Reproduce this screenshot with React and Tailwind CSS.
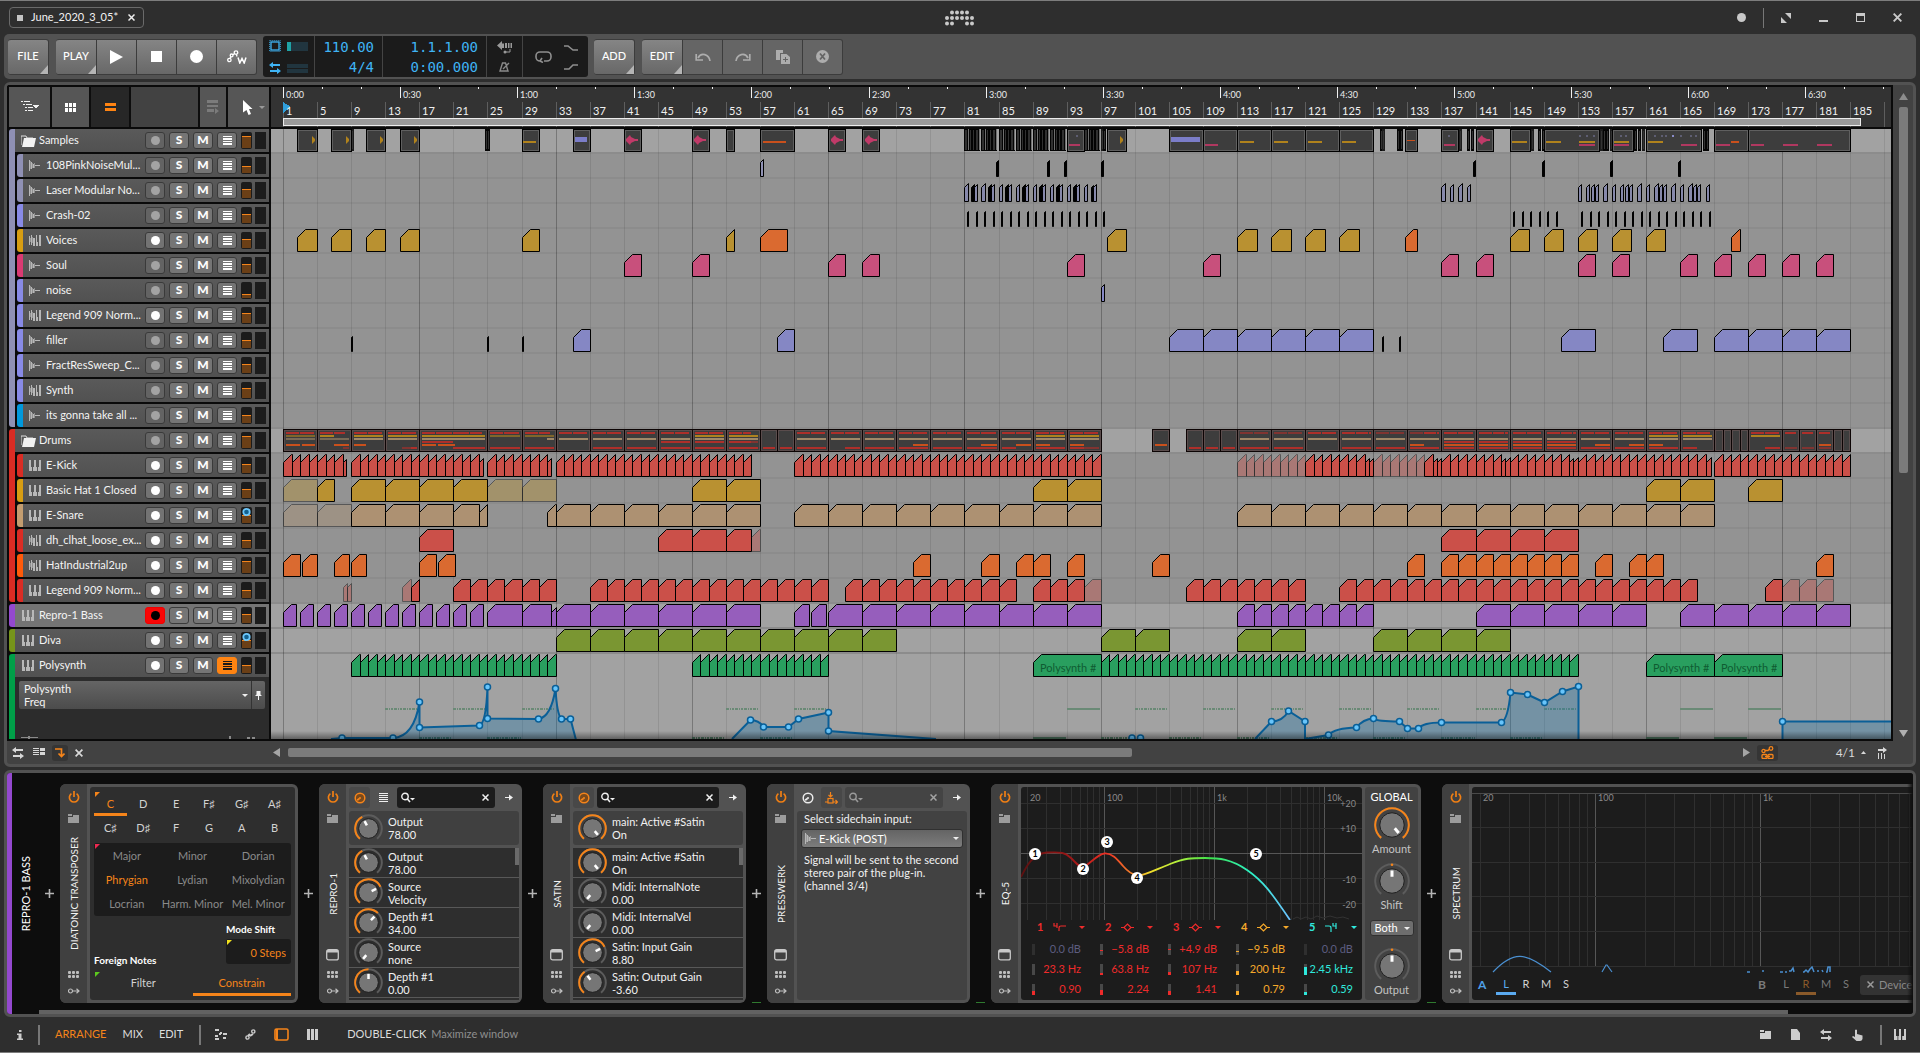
import { useState } from "react";
import clsx from "clsx";

// timeline scale
const BAR = 8.518;
const ORIGIN = 12;
const X = (bar) => Math.round(ORIGIN + BAR * bar);

// clips of equal length, back to back
const run = (from, to, step, extra) => {
	const out = [];
	for (let b = from; b < to - 0.01; b += step) out.push([b, Math.min(b + step, to), extra]);
	return out;
};
const each = (starts, len, extra) => starts.map((s) => [s, s + len, extra]);

const GOLD = "#b99131";
const ORANGE = "#da6a30";
const PINK = "#c8507c";
const LAV = "#8587c4";
const RED = "#cb5049";
const TAN = "#ad9172";
const PURPLE = "#965ebc";
const OLIVE = "#7a9632";
const GREEN = "#299f5f";
const faded = { faded: true };
const black = { color: "#000" };

const laser = [];
for (let b = 80; b < 96; b += 2) laser.push([b, b + 0.4], [b + 0.8, b + 1.1, black], [b + 1.1, b + 1.5]);

const samples = [
	{ name: "108PinkNoiseMul...", kind: "audio", strip: "bg-[#8f90b4]", fader: 9, color: "#9092b4", clips: [[56, 56.4], ...each([83.7, 89.7, 91.7, 96, 139.7, 147.8, 155.8, 163.8], 0.25, black)] },
	{ name: "Laser Modular No...", kind: "audio", strip: "bg-[#8f90b4]", fader: 7, color: "#8688aa", clips: [...laser, ...each([136, 137, 138, 139, 152, 152.95, 153.5, 154, 155, 156, 156.95, 157.5, 158, 159, 160, 161, 161.5, 162, 163, 164, 165, 165.5, 166, 167], 0.4)] },
	{ name: "Crash-02", kind: "audio", strip: "bg-[#888ae6]", fader: 7, color: "#000", clips: [...run(80.3, 97, 1), ...run(144.4, 150, 1), ...run(152.4, 168, 1)].map(([s]) => [s, s + 0.12]) },
	{ name: "Voices", kind: "hybrid", arm: true, strip: "bg-[#d79d12]", fader: 7, color: GOLD, clips: [[1.67, 4], [5.65, 8], [9.75, 12], [13.75, 16], [28, 30], [52, 53], [56, 59.2, { color: ORANGE }], [96.7, 99], ...each([112, 116, 120, 124], 2.3), [131.7, 133.1, { color: ORANGE }], ...each([144, 148, 152, 156, 160], 2.3), [170, 171, { color: ORANGE }]] },
	{ name: "Soul", kind: "audio", strip: "bg-[#da3a72]", fader: 7, color: PINK, clips: each([40, 48, 64, 68, 92, 108, 136, 140, 152, 156, 164, 168, 172, 176, 180], 2) },
	{ name: "noise", kind: "audio", strip: "bg-[#888ae6]", fader: 12, color: LAV, clips: [[96, 96.4]] },
	{ name: "Legend 909 Norm...", kind: "hybrid", arm: true, strip: "bg-[#888ae6]", fader: 6, clips: [] },
	{ name: "filler", kind: "audio", strip: "bg-[#888ae6]", fader: 8, color: LAV, clips: [...each([8, 24, 28, 129, 131], 0.12, black), [34, 36], [58, 60], ...run(104, 128, 4), [150, 154], [162, 166], ...run(168, 184, 4)] },
	{ name: "FractResSweep_C...", kind: "audio", strip: "bg-[#888ae6]", fader: 7, clips: [] },
	{ name: "Synth", kind: "hybrid", strip: "bg-[#888ae6]", fader: 6, clips: [] },
	{ name: "its gonna take all ...", kind: "audio", strip: "bg-[#0098dc]", fader: 8, clips: [] },
];

const drums = [
	{ name: "E-Kick", kind: "keys", arm: true, strip: "bg-[#da2c24]", fader: 7, color: RED, clips: [...run(0, 7.4, 1), ...run(8, 23.5, 1), ...run(24, 31.5, 1), ...run(32, 55, 1), ...run(60, 96, 1), ...run(112, 120, 1, faded), ...run(120, 127, 1), ...run(127, 128, 0.5), ...run(128, 134, 1, faded), [134, 135], ...run(135, 136, 0.5), ...run(136, 143, 1), ...run(143, 144, 0.5), ...run(144, 151, 1), ...run(151, 152, 0.5), ...run(152, 167.6, 1), ...run(168, 184, 1)] },
	{ name: "Basic Hat 1 Closed", kind: "keys", arm: true, strip: "bg-[#d79d12]", fader: 7, color: GOLD, clips: [[0, 4, faded], [4, 6], ...run(8, 24, 4), ...run(24, 32, 4, faded), ...run(48, 56, 4), ...run(88, 96, 4), ...run(160, 168, 4), [172, 176]] },
	{ name: "E-Snare", kind: "keys", arm: true, strip: "bg-[#c39d70]", knob: true, color: TAN, clips: [...run(0, 8, 4, faded), ...run(8, 20, 4), [20, 23], [23, 24], [31, 32], ...run(32, 56, 4), ...run(60, 96, 4), ...run(112, 168, 4)] },
	{ name: "dh_clhat_loose_ex...", kind: "hybrid", arm: true, strip: "bg-[#da2c24]", fader: 8, color: RED, clips: [[16, 20], [44, 48], [48, 52], [52, 55], [55, 56, faded], ...run(136, 152, 4)] },
	{ name: "HatIndustrial2up", kind: "hybrid", arm: true, strip: "bg-[#ff5a0a]", fader: 4, color: ORANGE, clips: [[0, 2], [2.2, 4], [6, 7.8], [8, 9.8], [16, 18], [18.2, 20.2], [74, 76], [82, 84], [86, 88], [88, 90], [92, 94], [102, 104], [132, 134], ...run(136, 152, 2), [154, 156], [158, 160], [160, 162], [180, 182]] },
	{ name: "Legend 909 Norm...", kind: "keys", arm: true, strip: "bg-[#da2c24]", fader: 8, color: RED, clips: [[7, 7.5, faded], [7.5, 8, faded], [14, 15, faded], [15, 16], ...run(20, 32, 2), ...run(36, 64, 2), ...run(66, 86, 2), ...run(88, 94, 2), [94, 96, faded], ...run(106, 120, 2), ...run(124, 166, 2), [174, 176], ...run(176, 182, 2, faded)] },
];

const repro = { name: "Repro-1 Bass", kind: "keys", selected: true, strip: "bg-[#9449cf]", fader: 7, color: PURPLE, clips: [...each([0, 2, 4, 6, 8, 10, 12, 14, 16, 18, 20, 22], 1.5), [24, 28], [28, 31.5], [31.5, 32], ...run(32, 56, 4), [60, 61.8], [62, 63.8], ...run(64, 96, 4), ...run(112, 128, 2), ...run(140, 160, 4), ...run(164, 184, 4)] };
const diva = { name: "Diva", kind: "keys", arm: true, strip: "bg-[#76941a]", knob: true, color: OLIVE, clips: [...run(32, 72, 4), ...run(96, 104, 4), ...run(112, 120, 4), ...run(128, 144, 4)] };
const poly = { name: "Polysynth", kind: "keys", arm: true, lanes: true, strip: "bg-[#009f48]", fader: 8, color: GREEN, clips: [...run(8, 32, 1), ...run(48, 64, 1), [88, 96], ...run(96, 152, 1), [160, 168], [168, 176]] };

// folder lane of "Samples": outer blocks, thin stripes and miniature content
const sampleBlocks = [[1.67, 4], [5.65, 8], [9.75, 12], [13.75, 16], [28, 30], [34, 36], [40, 42], [48, 50], [52, 53], [56, 60], [64, 66], [68, 70], [92, 94], [96.7, 99], [104, 108], [108, 112], [112, 116], [116, 120], [120, 124], [124, 128], [131.7, 133.1], [136, 138], [140, 142], [144, 146.4], [148, 154.5], [156, 158.5], [160, 166.5], [168, 172], [172, 184]];
const stripes = [8, 23.7, 23.95, 96, 96.3, 128.8, 129.05, 130.8, 131.1, 138.1, 139, 139.5, 146.5, 147.3, 147.8, 154.6, 155, 155.3, 155.8, 158.6, 159.1, 159.5, 166.7, 167.1];
const denseBars = [80, 82, 84, 86, 88, 90, 94];
const minis = [
	[28.2, 29.7, 12, 2, "#b0821c"], [34.3, 35.7, 8, 5, "#7b7dc8"], [56.3, 59, 12, 2, "#c9501c"],
	[92.3, 93.6, 15, 2, "#b03860"], [104.3, 107.7, 8, 5, "#7b7dc8"], [108.3, 109.8, 15, 2, "#b03860"],
	[112.3, 114, 12, 2, "#b0821c"], [116.3, 118, 12, 2, "#b0821c"], [120.3, 122, 12, 2, "#b0821c"], [124.3, 126, 12, 2, "#b0821c"],
	[132, 132.9, 11, 1, "#c9501c"], [136.3, 137.6, 15, 2, "#b03860"], [144.3, 146, 12, 2, "#b0821c"],
	[148.3, 150, 12, 2, "#b0821c"], [152.1, 154, 12, 2, "#b0821c"], [152.1, 154, 15, 2, "#b03860"],
	[156.3, 158, 12, 2, "#b0821c"], [156.3, 158, 15, 2, "#b03860"], [160.3, 162, 12, 2, "#b0821c"],
	[164.1, 166, 15, 2, "#b03860"], [168.2, 169.9, 15, 2, "#b03860"], [170, 170.9, 12, 2, "#c9501c"],
	[172.3, 173.9, 15, 2, "#b03860"], [176.1, 177.8, 15, 2, "#b03860"], [180.1, 181.9, 15, 2, "#b03860"],
];
const tinyWaves = [3.4, 7.4, 11.4, 15.4, 98.3];
const bigWaves = [40.3, 48.3, 64.3, 68.3, 140.3];

const drumBlocks = [...run(0, 16, 4), [16, 24], ...run(24, 56, 4), [56, 58], [58, 60], ...run(60, 96, 4), [102, 104], ...run(106, 112, 2), ...run(112, 168, 4), ...run(168, 172, 1), [172, 176], [176, 178], [178, 180], [180, 182], [182, 183], [183, 184]];
const drumMini = ["#ad2f2a", "#ad821f", "#a08868", "#ad2f2a", "#c9501c", "#ad2f2a"];

const Clip = ({ from, to, color, dim }) => {
	const x = X(from) + 0.5;
	const w = Math.max(1, X(to) - X(from));
	const cut = Math.min(w, 8);
	return (
		<path
			d={`M${x},8.5 L${x + cut},${8.5 - cut} H${x + w} V22.5 H${x} Z`}
			fill={color}
			stroke="#000"
			opacity={dim ? 0.4 : 1}
		/>
	);
};

const Block = ({ from, to }) => {
	const x = X(from);
	const w = X(to) - x;
	return (
		<g shapeRendering="crispEdges">
			<rect x={x} y="0" width={w + 1} height="23" fill="#000" />
			<rect x={x + 1} y="1" width={Math.max(1, w - 1)} height="21" fill="#5f5f5f" />
			<rect x={x + 2} y="2" width={Math.max(0, w - 3)} height="19" fill="#3d3d3d" />
		</g>
	);
};

const SamplesLane = () => (
	<svg className="relative z-10 h-full w-full" aria-hidden="true">
		{stripes.map((b, i) => (
			<g key={i} shapeRendering="crispEdges">
				<rect x={X(b)} y="0" width="3" height="22" fill={i % 3 ? "#050505" : "#1c1c1c"} />
				<rect x={X(b) + 1} y="2" width="1" height="18" fill="#333" />
			</g>
		))}
		{denseBars.map((b) => (
			<g key={b} shapeRendering="crispEdges" transform={`translate(${X(b)},0)`}>
				<rect y="0" width="16" height="22" fill="#030303" />
				<path d="M1,1 H3 V21 H1 Z M6,1 H7 V21 H6 Z M9,1 H10 V21 H9 Z M12,1 H14 V21 H12 Z" fill="#303030" />
				<path d="M4,0 H5 V21 H4 Z M15,0 H16 V21 H15 Z" fill="#6f6f6f" />
			</g>
		))}
		{sampleBlocks.map(([s, e], i) => <Block key={i} from={s} to={e} />)}
		{minis.map(([s, e, y, h, c], i) => (
			<rect key={i} x={X(s)} y={y} width={X(e) - X(s)} height={h} fill={c} />
		))}
		{tinyWaves.map((b) => (
			<path key={b} d={`M${X(b)},7 V15 L${X(b) + 3},12 V10 Z`} fill="#b0821c" />
		))}
		{bigWaves.map((b) => (
			<path key={b} d={`M${X(b)},10 l2,-2 l2,-2 l1,2 l2,1 l2,1 h3 v2 h-3 l-2,1 l-2,1 l-1,2 l-2,-2 l-2,-2 z`} fill="#c03a68" />
		))}
		{[93.1, 136.8, 152.1, 153, 153.8, 157, 157.6, 161, 161.8, 162.3, 164, 165.2, 165.8].map((b) => (
			<rect key={b} x={X(b)} y="6" width="2" height="2" fill="#5e5e72" />
		))}
		<rect x={X(163.1)} y="6" width="2" height="2" fill="#8a8cc8" />
	</svg>
);

const DrumsLane = () => (
	<svg className="relative z-10 h-full w-full" aria-hidden="true">
		{drumBlocks.map(([s, e], i) => (
			<g key={i} shapeRendering="crispEdges">
				<rect x={X(s)} y="0" width={X(e) - X(s) + 1} height="23" fill="#0c0404" />
				<rect x={X(s) + 1} y="1" width={X(e) - X(s) - 1} height="21" fill="#5a4c4c" />
				<rect x={X(s) + 2} y="2" width={X(e) - X(s) - 3} height="19" fill="#3d3d3d" />
				{drums.map((d, lane) =>
					d.clips
						.filter(([cs, ce]) => cs >= s - 0.01 && ce <= e + 0.01 && e - s > 1.5)
						.map(([cs, ce, opt], k) => {
							const x = Math.max(X(cs), X(s) + 3);
							const w = Math.min(X(ce), X(e) - 2) - x - (lane === 0 && k % 2 ? 1 : 0);
							return <rect key={`${lane}-${k}`} x={x} y={3 + lane * 3} width={Math.max(w, 1)} height="2" fill={drumMini[lane]} opacity={opt?.faded ? 0.6 : 1} />;
						})
				)}
			</g>
		))}
	</svg>
);

const Lane = ({ track, top, children }) => (
	<div className={clsx("relative h-[23px]", top ? "bg-[#a2a2a2]" : "bg-[#939393]")}>
		{children || (
			<svg className="relative z-10 h-full w-full" aria-hidden="true">
				{track.clips.map(([s, e, opt], i) => (
					<Clip key={i} from={s} to={e} color={opt?.color || track.color} dim={opt?.faded} />
				))}
			</svg>
		)}
		{track?.lanes &&
			track.clips.filter(([s, e]) => e - s > 4).map(([s, e]) => (
				<span
					key={s}
					className="absolute top-1.5 z-20 overflow-hidden whitespace-nowrap text-[11px] leading-4 text-[#0f5c32]"
					style={{ left: X(s) + 7, width: X(e) - X(s) - 12 }}
				>
					Polysynth #
				</span>
			))}
	</div>
);

// sits over the lane backgrounds and under the clips
const Grid = () => (
	<svg className="pointer-events-none absolute inset-0 h-full w-full" shapeRendering="crispEdges" aria-hidden="true">
		{Array.from({ length: 48 }, (_, i) => (
			<line key={i} x1={X(i * 4) + 0.5} x2={X(i * 4) + 0.5} y1="0" y2="100%" stroke="#000" strokeOpacity={i % 4 ? 0.09 : 0.26} />
		))}
	</svg>
);

const points = [[71, 61], [122, 61], [148.5, 25], [148.5, 50.5], [208.5, 48.5], [216.5, 10], [216.5, 41.5], [267.5, 42], [284.5, 11.5], [290.5, 42], [299.5, 42], [479.5, 43], [492.5, 50], [517.5, 50], [527.5, 42], [557.5, 35.5], [557.5, 54], [861, 61], [869.5, 61], [1000.5, 44.5], [1017.5, 34], [1034, 44.5], [1057.5, 58], [1085.5, 50.5], [1102.5, 41.5], [1128.5, 44.5], [1136.5, 51.5], [1147.5, 51.5], [1170.5, 45.5], [1230.5, 45.5], [1239.5, 15.5], [1256.5, 17.5], [1273.5, 25.5], [1291.5, 14.5], [1307.5, 9.5], [1511.5, 44.5]];
const curves = [
	"M60,62 L71,61 L122,61 Q143,60 148.5,25 L148.5,50.5 L208.5,48.5 Q215,46 216.5,10 L216.5,41.5 L267.5,42 Q280,40 284.5,11.5 Q286,38 290.5,42 L299.5,42 L305,63",
	"M461,62 L479.5,43 Q488,43 492.5,50 L517.5,50 L527.5,42 L557.5,35.5 L557.5,54 L665,62",
	"M984,62 L1000.5,44.5 Q1012,44 1017.5,34 L1034,44.5 L1034,62 L1057.5,58 Q1064,51 1085.5,50.5 Q1092,42 1102.5,41.5 Q1106,44.5 1128.5,44.5 L1136.5,51.5 L1147.5,51.5 Q1152,45.5 1170.5,45.5 L1230.5,45.5 Q1237,42 1239.5,15.5 L1256.5,17.5 L1273.5,25.5 L1291.5,14.5 L1307.5,9.5 L1307.5,62",
	"M1511.5,62 L1511.5,44.5 L3000,44.5 L3000,62",
];
const upperNotes = [12, 20, 28, 52, 60, 92, 100, 108, 116, 124, 132, 140, 148, 164, 172];
const lowerNotes = [8, 16, 24, 48, 56, 88, 96, 104, 112, 120, 128, 136, 144, 160, 168];

const AutomationLane = () => (
	<div className="relative h-[62px] overflow-hidden bg-[#a2a2a2]">
		<svg className="relative z-10 h-full w-full" aria-hidden="true">
			{upperNotes.map((b) => (
				<line key={b} x1={X(b)} x2={X(b + 4) - 1} y1="32" y2="32" stroke="#6a8a76" strokeWidth="2" strokeDasharray={[92, 164, 172].includes(b) ? "none" : "3 1 1 1 2 1"} />
			))}
			{lowerNotes.map((b) => (
				<line key={b} x1={X(b)} x2={X(b + 4) - 1} y1="61" y2="61" stroke="#4f7560" strokeWidth="2" strokeDasharray={[88, 160, 168].includes(b) ? "none" : "3 1 1 1 2 1"} />
			))}
			{curves.map((d) => (
				<g key={d}>
					<path d={`${d} V62 Z`} fill="#146fa8" fillOpacity="0.32" />
					<path d={d} fill="none" stroke="#0a5f97" strokeWidth="2" />
				</g>
			))}
			{points.map(([x, y], i) => (
				<circle key={i} cx={x} cy={y} r="3" fill="#68c5fb" stroke="#0a5f97" strokeWidth="1.5" />
			))}
		</svg>
		<div className="absolute inset-x-0 bottom-0 z-20 h-2 bg-linear-to-b from-transparent to-black/40" />
	</div>
);

/* ---------- icons ---------- */

const KindIcon = ({ kind }) => (
	<svg width="12" height="13" viewBox="0 0 12 13" fill="#b8b8b8" shapeRendering="crispEdges" className="shrink-0" aria-hidden="true">
		{kind === "audio" && (
			<>
				<rect x="0" y="1" width="1" height="11" />
				<rect x="1" y="2" width="1" height="8" opacity=".6" />
				<rect x="2" y="3" width="1" height="7" />
				<rect x="3" y="4" width="1" height="5" opacity=".6" />
				<rect x="4" y="5" width="1" height="4" />
				<rect x="5" y="4" width="1" height="5" opacity=".6" />
				<rect x="6" y="6" width="5" height="1" />
			</>
		)}
		{kind === "hybrid" && (
			<>
				<rect x="0" y="2" width="1" height="9" />
				<rect x="1" y="4" width="1" height="4" opacity=".6" />
				<rect x="2" y="1" width="1" height="10" />
				<rect x="3" y="3" width="1" height="6" opacity=".6" />
				<rect x="4" y="4" width="2" height="8" />
				<rect x="7" y="1" width="1" height="11" />
				<rect x="8" y="8" width="1" height="4" />
				<rect x="10" y="1" width="2" height="11" />
			</>
		)}
		{kind === "keys" && (
			<>
				<rect x="0" y="1" width="2" height="11" />
				<rect x="2" y="8" width="1" height="4" />
				<rect x="4" y="8" width="1" height="4" />
				<rect x="5" y="1" width="2" height="11" />
				<rect x="7" y="8" width="1" height="4" />
				<rect x="9" y="8" width="1" height="4" />
				<rect x="10" y="1" width="2" height="11" />
			</>
		)}
	</svg>
);

const Folder = ({ className }) => (
	<svg width="15" height="12" viewBox="0 0 15 12" className={className} aria-hidden="true">
		<path d="M0,10 V1 H5 L6,3 H12" fill="none" stroke="#ddd" />
		<path d="M3,3 H15 L13,12 H1 Z" fill="#f2f2f2" />
	</svg>
);

const SmallFolder = ({ fill = "#9c9c9c" }) => (
	<svg width="11" height="9" viewBox="0 0 11 9" aria-hidden="true">
		<path d="M0,0 H4 V2 H0 Z M0,3 H5 V1 H11 V9 H0 Z" fill={fill} />
	</svg>
);

const Power = () => (
	<svg width="12" height="12" viewBox="0 0 12 12" fill="none" stroke="#f07f14" strokeWidth="1.7" aria-hidden="true">
		<path d="M3.4,2.6 A4.6,4.6 0 1 0 8.6,2.6 M6,0 V6" />
	</svg>
);

const WindowIcon = () => (
	<svg width="13" height="12" viewBox="0 0 13 12" aria-hidden="true">
		<rect x=".7" y=".7" width="11.6" height="10.2" rx="2" fill="none" stroke="#c8c8c8" strokeWidth="1.3" />
		<rect x="1" y="1" width="11" height="2.5" fill="#c8c8c8" />
	</svg>
);

const Dots = () => (
	<svg width="11" height="7" viewBox="0 0 11 7" fill="#bdbdbd" aria-hidden="true">
		{[0, 4, 8].flatMap((x) => [0, 4].map((y) => <rect key={`${x}${y}`} x={x} y={y} width="3" height="3" rx="1" />))}
	</svg>
);

const Patch = () => (
	<svg width="12" height="6" viewBox="0 0 12 6" fill="none" stroke="#bdbdbd" aria-hidden="true">
		<circle cx="2.5" cy="3" r="2" strokeWidth="1.2" />
		<path d="M4.5,3 H11 M8.5,.7 L11,3 L8.5,5.3" strokeWidth="1.2" />
	</svg>
);

const Arrows = ({ color }) => (
	<svg width="12" height="12" viewBox="0 0 12 12" fill={color} aria-hidden="true">
		<path d="M0,3 L4,0 V2 H11 V4 H4 V6 Z M12,9 L8,6 V8 H1 V10 H8 V12 Z" />
	</svg>
);

const Search = ({ color }) => (
	<svg width="15" height="12" viewBox="0 0 15 12" fill="none" stroke={color} aria-hidden="true">
		<circle cx="4" cy="4.5" r="3.2" strokeWidth="1.4" />
		<path d="M6.2,6.8 L9,10" strokeWidth="1.6" />
		<path d="M9,6 H14 L11.5,8.6 Z" fill={color} stroke="none" />
	</svg>
);

const ArrowRight = () => (
	<svg width="8" height="7" viewBox="0 0 8 7" aria-hidden="true">
		<path d="M0,3 H4 V0.5 L8,3.5 L4,6.5 V4 H0 Z" fill="#f0f0f0" />
	</svg>
);

const Cross = ({ color = "#eee", size = 7 }) => (
	<svg width={size} height={size} viewBox="0 0 7 7" stroke={color} strokeWidth="1.5" aria-hidden="true">
		<path d="M.5,.5 L6.5,6.5 M6.5,.5 L.5,6.5" />
	</svg>
);

const Caret = ({ color = "#eee" }) => (
	<svg width="6" height="3" viewBox="0 0 6 3" fill={color} aria-hidden="true">
		<path d="M0,0 H6 L3,3 Z" />
	</svg>
);

/* ---------- title bar and transport ---------- */

const TitleBar = () => (
	<header className="grid h-[34px] grid-cols-[1fr_auto_1fr] items-center border-t border-[#7d7d7d] px-2">
		<div className="ml-px flex h-[21px] w-[135px] items-center rounded border border-[#6a6a6a] pl-[7px] pr-2 text-[11px] text-[#f2f2f2]">
			<span className="mr-2 h-1.5 w-1.5 bg-[#c4c4c4]" />
			<span className="flex-1 whitespace-nowrap">June_2020_3_05*</span>
			<button type="button" aria-label="Close project"><Cross /></button>
		</div>
		<svg width="32" height="16" viewBox="0 0 32 16" fill="#c9c9c9" aria-hidden="true">
			{[8, 13, 18, 23].map((x) => <circle key={x} cx={x} cy="2.5" r="2" />)}
			{[3, 8, 13, 18, 23, 28].map((x) => <circle key={x} cx={x} cy="8" r="2" />)}
			{[3, 8, 23, 28].map((x) => <circle key={x} cx={x} cy="13.5" r="2" />)}
		</svg>
		<div className="flex items-center justify-self-end pr-2.5">
			<span className="h-[9px] w-[9px] rounded-full bg-[#c9c9c9]" />
			<span className="ml-[17px] h-5 w-px bg-[#777]" />
			<button type="button" aria-label="Full screen" className="ml-[17px]">
				<svg width="10" height="10" viewBox="0 0 10 10" fill="#c9c9c9"><path d="M4,0 H10 V6 Z M0,4 V10 H6 Z" /></svg>
			</button>
			<button type="button" aria-label="Minimize" className="ml-7 mt-[7px] h-0.5 w-[9px] bg-[#c9c9c9]" />
			<button type="button" aria-label="Maximize" className="ml-7 h-[9px] w-[9px] border border-t-[3px] border-[#c9c9c9]" />
			<button type="button" aria-label="Close" className="ml-7"><Cross size={9} color="#c9c9c9" /></button>
		</div>
	</header>
);

const BigButton = ({ label, menu, disabled, first, last, children }) => (
	<button
		type="button"
		aria-label={label}
		disabled={disabled}
		className={clsx(
			"relative flex h-9 items-center justify-center border border-l-0 border-[#3c3c3c] text-[11px] font-medium text-white",
			disabled ? "bg-[#656565]" : "bg-linear-to-b from-[#858585] to-[#686868]",
			first ? "w-[41px] rounded-l-[3px] border-l" : "w-10",
			last && "rounded-r-[3px]"
		)}
	>
		{children}
		{menu && (
			<svg width="8" height="9" viewBox="0 0 8 9" className="absolute bottom-0 right-0" aria-hidden="true">
				<path d="M8,0 V9 H0 Z" fill="#b5b5b5" />
			</svg>
		)}
	</button>
);

const Display = () => (
	<div className="flex h-[41px] rounded-[3px] bg-[#1b1b1b]">
		<div className="flex w-[52px] flex-col justify-between border-r border-[#444] px-1.5 pb-[3px] pt-1">
			<div className="flex items-center gap-1.5">
				<svg width="12" height="12" viewBox="0 0 12 12" fill="none" stroke="#3fb4f5" aria-hidden="true">
					<rect x="2" y="2" width="8" height="8" strokeWidth="1.3" />
					<rect x=".7" y=".7" width="10.6" height="10.6" strokeDasharray="1 1" />
				</svg>
				<span className="h-[9px] w-[21px] border-l-4 border-[#1fa3a6] bg-[#21353f]" />
			</div>
			<div className="flex items-center gap-1.5">
				<Arrows color="#3fb4f5" />
				<span className="h-[9px] w-[21px] border-y-4 border-[#21353f] bg-[#1b1b1b]" />
			</div>
		</div>
		<div className="flex w-[68px] flex-col items-end justify-center border-r border-[#444] pr-2 font-['DejaVu_Sans_Mono',monospace] text-[14px] leading-5 text-[#3fb4f5]">
			<span>110.00</span>
			<span>4/4</span>
		</div>
		<div className="flex w-[104px] flex-col items-end justify-center border-r border-[#444] pr-2 font-['DejaVu_Sans_Mono',monospace] text-[14px] leading-5 text-[#3fb4f5]">
			<span>1.1.1.00</span>
			<span>0:00.000</span>
		</div>
		<div className="flex w-9 flex-col items-center justify-between border-r border-[#444] py-[5px]">
			<svg width="15" height="13" viewBox="0 0 15 13" fill="#999" aria-hidden="true">
				<path d="M0,4.5 L5,0 V2.5 H7 V7 H5 V9 Z M8,2 H10 V7 H8 Z M11,2 H12.5 V7 H11 Z M13.5,2 H15 V7 H13.5 Z" />
				<circle cx="8" cy="11" r="1.5" />
				<path d="M8,11 L13,11 V8" fill="none" stroke="#999" />
			</svg>
			<svg width="11" height="10" viewBox="0 0 11 10" fill="none" stroke="#8a8a8a" strokeWidth="1.4" aria-hidden="true">
				<path d="M3.5,1 H6.5 L9,9 H1 Z M4,7 L10,1" />
			</svg>
		</div>
		<div className="flex w-[65px] items-center justify-between pl-3 pr-2.5">
			<svg width="17" height="12" viewBox="0 0 17 12" fill="none" stroke="#8f8f8f" strokeWidth="1.6" aria-hidden="true">
				<path d="M9,10 H12 A4,4 0 0 0 16,6 V5 A4,4 0 0 0 12,1 H5 A4,4 0 0 0 1,5 V6 A4,4 0 0 0 5,10 L7,7 M5,10 L8,11.5" />
			</svg>
			<svg width="14" height="28" viewBox="0 0 14 28" fill="none" stroke="#8f8f8f" strokeWidth="1.6" aria-hidden="true">
				<path d="M0,3 H4 L9,7 H14 M0,26 H5 L9,22 H14" />
			</svg>
		</div>
	</div>
);

const Transport = () => (
	<div className="mx-1 flex h-[45px] items-center rounded-[5px] bg-[#525252] pl-1">
		<BigButton label="File" menu first last>FILE</BigButton>
		<div className="ml-[7px] flex">
			<BigButton label="Play menu" menu first>PLAY</BigButton>
			<BigButton label="Play"><svg width="13" height="14"><path d="M0,0 L13,7 L0,14 Z" fill="#fff" /></svg></BigButton>
			<BigButton label="Stop"><span className="h-[11px] w-[11px] bg-white" /></BigButton>
			<BigButton label="Record"><span className="h-[13px] w-[13px] rounded-full bg-white" /></BigButton>
			<BigButton label="Automation write" last>
				<svg width="20" height="14" viewBox="0 0 20 14" fill="none" stroke="#fff" strokeWidth="1.3">
					<circle cx="2.4" cy="10" r="1.7" />
					<circle cx="4.6" cy="5.4" r="1.4" />
					<circle cx="9" cy="2.6" r="1.8" />
					<path d="M3,8.4 L4,6.8 M5.9,4.7 L7.5,3.6 M9.4,4.4 L10,6.5" />
					<path d="M11,7.5 L12.8,13 L15,8.5 L17.2,13 L19,7.5" strokeWidth="1.5" />
				</svg>
			</BigButton>
		</div>
		<div className="ml-1.5"><Display /></div>
		<div className="ml-1.5"><BigButton label="Add" menu first last>ADD</BigButton></div>
		<div className="ml-[7px] flex">
			<BigButton label="Edit" menu first>EDIT</BigButton>
			<BigButton label="Undo" disabled>
				<svg width="16" height="10" viewBox="0 0 16 10" fill="none" stroke="#adadad" strokeWidth="1.7"><path d="M15,9 C14,2 6,0 3,6 M1.2,2 V8 H8" /></svg>
			</BigButton>
			<BigButton label="Redo" disabled>
				<svg width="16" height="10" viewBox="0 0 16 10" fill="none" stroke="#adadad" strokeWidth="1.7"><path d="M1,9 C2,2 10,0 13,6 M14.8,2 V8 H8" /></svg>
			</BigButton>
			<BigButton label="Duplicate" disabled>
				<svg width="14" height="14" viewBox="0 0 14 14" fill="#adadad"><path d="M0,0 H7 V3 H4 V10 H0 Z M5,4 H10.5 L14,7 V14 H5 Z" /><path d="M9.5,7 V12 M7,9.5 H12" stroke="#656565" /></svg>
			</BigButton>
			<BigButton label="Delete" disabled last>
				<svg width="13" height="13" viewBox="0 0 13 13"><circle cx="6.5" cy="6.5" r="6.5" fill="#adadad" /><path d="M4,3.5 L9,9.5 M9,3.5 L4,9.5" stroke="#656565" strokeWidth="1.8" /></svg>
			</BigButton>
		</div>
	</div>
);

/* ---------- track headers ---------- */

const mini = "flex h-[17px] w-5 shrink-0 items-center justify-center rounded-[3px] border border-[#3a3a3a] text-[12px] font-black text-white";

const TrackControls = ({ track }) => (
	<div className="flex shrink-0 items-center gap-1 pb-px pr-[3px]">
		<button
			type="button"
			aria-label={`Arm ${track.name}`}
			className={clsx(mini, track.selected ? "border-[#f10000] bg-[#f90606]" : track.arm ? "bg-[#737373]" : "bg-[#636363]")}
		>
			<span className={clsx("h-[9px] w-[9px] rounded-full", track.selected ? "bg-black" : track.arm ? "bg-white" : "bg-[#a3a3a3]")} />
		</button>
		<button type="button" aria-label={`Solo ${track.name}`} className={clsx(mini, "bg-[#757575]")}>S</button>
		<button type="button" aria-label={`Mute ${track.name}`} className={clsx(mini, "bg-[#757575]")}>M</button>
		<button type="button" aria-label={`Automation lanes of ${track.name}`} className={clsx(mini, track.lanes ? "border-[#ff8412] bg-[#ff8412]" : "bg-[#757575]")}>
			<svg width="9" height="9" viewBox="0 0 9 9" fill={track.lanes ? "#1a1a1a" : "#fff"} shapeRendering="crispEdges">
				<path d="M0,0 H9 V1 H0 Z M0,2 H9 V4 H0 Z M0,5 H9 V6 H0 Z M0,7 H9 V9 H0 Z" />
			</svg>
		</button>
		<div className="relative h-[17px] w-[11px] overflow-hidden rounded-[2px] bg-[#1b1b1b]">
			<div className="absolute inset-x-px bottom-px border-t border-[#f5841a] bg-[#6b3f16]" style={{ top: track.knob ? 8 : track.fader }} />
			{track.knob && (
				<svg width="11" height="17" className="absolute inset-0"><circle cx="5.5" cy="5" r="3.2" fill="#12618f" stroke="#6cc6fa" strokeWidth="1.8" /></svg>
			)}
		</div>
		<div className="-ml-px h-[17px] w-[11px] bg-[#1c1c1c]" />
	</div>
);

const TrackRow = ({ track, icon, className }) => (
	<div className={clsx("flex h-[23px] min-w-0 flex-1 items-center text-[11px] text-[#f4f4f4]", track.selected ? "bg-[#747474]" : "bg-linear-to-b from-[#5a5a5a] to-[#515151]", className)}>
		{icon || <KindIcon kind={track.kind} />}
		<span className="ml-[5px] flex-1 overflow-hidden whitespace-nowrap">{track.name}</span>
		<TrackControls track={track} />
	</div>
);

const Group = ({ name, strip, tracks }) => (
	<div className="flex">
		<div className={clsx("w-1.5 shrink-0 rounded-l-[3px]", strip)} />
		<div className="flex min-w-0 flex-1 flex-col gap-0.5">
			<div className="flex">
				<TrackRow track={{ name, fader: 4 }} icon={<Folder className="-mr-0.5 shrink-0" />} className="pl-1.5" />
			</div>
			{tracks.map((t, i) => (
				<div key={i} className="ml-0.5 flex">
					<div className={clsx("w-1.5 shrink-0 rounded-l-[3px]", t.strip)} />
					<TrackRow track={t} className="pl-1.5" />
				</div>
			))}
		</div>
	</div>
);

const TrackList = () => (
	<div className="flex w-[260px] shrink-0 flex-col gap-0.5">
		<div className="flex h-10 gap-0.5 bg-[#0d0d0d]">
			<button type="button" aria-label="Track display" className="flex w-[41px] items-center justify-center bg-[#565656]">
				<svg width="18" height="12" viewBox="0 0 18 12" shapeRendering="crispEdges"><path d="M0,0 H2 V1 H0 Z M3,0 H9 V1 H3 Z M2,3 H4 V4 H2 Z M5,3 H11 V4 H5 Z M4,6 H6 V7 H4 Z M7,6 H12 V7 H7 Z M4,9 H6 V10 H4 Z M7,9 H12 V10 H7 Z M12,4 H18 L15,8 Z" fill="#f2f2f2" /></svg>
			</button>
			<button type="button" aria-label="Clip launcher" className="flex w-[37px] items-center justify-center bg-[#565656]">
				<svg width="11" height="9" viewBox="0 0 11 9" fill="#fff" shapeRendering="crispEdges">
					{[0, 4, 8].flatMap((x) => [0, 5].map((y) => <rect key={`${x}${y}`} x={x} y={y} width="3" height="4" />))}
				</svg>
			</button>
			<button type="button" aria-label="Arranger timeline" className="flex w-[38px] items-center justify-center bg-[#272727]">
				<svg width="11" height="9" viewBox="0 0 11 9" fill="#ff8412"><rect width="11" height="3" /><rect y="5" width="11" height="3" /></svg>
			</button>
			<div className="flex-1 bg-[#424242]" />
			<button type="button" aria-label="Follow" className="flex w-[26px] items-center justify-center bg-[#565656]">
				<svg width="12" height="14" viewBox="0 0 12 14" fill="#7b7b7b"><path d="M0,0 H11 V3 H0 Z M0,5 H11 V7 H0 Z M0,9 H7 V12 H0 Z M8,8 L12,11 L8,14 Z" /></svg>
			</button>
			<button type="button" aria-label="Pointer tool" className="flex w-[41px] items-center justify-end gap-1.5 bg-[#565656] pr-1">
				<svg width="10" height="15" viewBox="0 0 10 15" fill="#fff"><path d="M0,0 L9.5,9 H6 L8,14 L5.5,15 L3.5,10 L0,12.5 Z" /></svg>
				<Caret color="#999" />
			</button>
		</div>
		<Group name="Samples" strip="bg-[#8f90b4]" tracks={samples} />
		<Group name="Drums" strip="bg-[#da2c24]" tracks={drums} />
		{[repro, diva].map((t) => (
			<div key={t.name} className="flex">
				<div className={clsx("w-1.5 shrink-0 rounded-l-[3px]", t.strip)} />
				<TrackRow track={t} className="pl-[7px]" />
			</div>
		))}
		<div className="flex">
			<div className={clsx("w-1.5 shrink-0 rounded-tl-[3px]", poly.strip)} />
			<div className="min-w-0 flex-1">
				<div className="flex"><TrackRow track={poly} className="pl-[7px]" /></div>
				<div className="flex h-[62px] flex-col justify-between overflow-hidden bg-[#2c2c2c] px-1 pt-1">
					<div className="flex h-7 rounded-[2px] bg-linear-to-b from-[#656565] to-[#4c4c4c] text-[11px] leading-[13px] text-[#f4f4f4]">
						<button type="button" aria-haspopup="listbox" className="flex flex-1 items-center justify-between pl-[5px] pr-[3px] text-left">
							<span>Polysynth<br />Freq</span>
							<Caret />
						</button>
						<button type="button" aria-label="Pin" className="flex w-3.5 items-center justify-center border-l border-[#333]">
							<svg width="7" height="9" viewBox="0 0 7 9" fill="#f2f2f2"><path d="M1.5,0 H5.5 V3.5 L7,5 H4 V9 H3 V5 H0 L1.5,3.5 Z" /></svg>
						</button>
					</div>
					<svg width="246" height="3" viewBox="0 0 246 3" fill="#8a8a8a" aria-hidden="true">
						<path d="M2,1 H19 V2 H2 Z M9,0 H11 V3 H9 Z M210,0 H212 V3 H210 Z M228,1 H231 V3 H228 Z M233,1 H236 V3 H233 Z" />
					</svg>
				</div>
			</div>
		</div>
	</div>
);

/* ---------- arranger ---------- */

const Ruler = () => (
	<div className="relative h-10 overflow-hidden bg-[#333]">
		<svg className="absolute inset-0 h-full w-full" shapeRendering="crispEdges" aria-hidden="true">
			{Array.from({ length: 42 }, (_, i) => {
				const x = Math.round(ORIGIN + (i * 117.1) / 3);
				return <rect key={i} x={x} y="0" width="1" height={i % 3 ? 2 : 11} fill="#f0f0f0" />;
			})}
			{Array.from({ length: 48 }, (_, i) => (
				<rect key={i} x={X(i * 4)} y="15" width="1" height="26" fill="#5e5e5e" />
			))}
			<path d={`M${ORIGIN},15 V26 L${ORIGIN + 8},20 Z`} fill="#2f9fdc" />
		</svg>
		{Array.from({ length: 14 }, (_, i) => (
			<span key={i} className="absolute top-0.5 text-[9px] leading-3 text-[#ececec]" style={{ left: Math.round(ORIGIN + i * 117.1) + 3 }}>
				{Math.floor(i / 2)}:{i % 2 ? "30" : "00"}
			</span>
		))}
		{Array.from({ length: 47 }, (_, i) => (
			<span key={i} className="absolute top-[17px] text-[11px] leading-[14px] text-[#f0f0f0]" style={{ left: X(i * 4) + 3 }}>
				{i * 4 + 1}
			</span>
		))}
		<div className="absolute top-[31px] h-2 border border-[#ececec] bg-[#9a9a9a]" style={{ left: ORIGIN, width: Math.round(BAR * 185.2) }} />
	</div>
);

const Arranger = () => (
	<section className="mx-1 mt-[3px] overflow-hidden rounded-[6px] border-[3px] border-[#525252] bg-[#424242]">
		<div className="flex">
			<div className="flex min-w-0 flex-1 gap-0.5 border-y-2 border-l-2 border-[#0a0a0a] bg-[#0a0a0a]">
				<TrackList />
				<div className="flex min-w-0 flex-1 flex-col gap-0.5">
					<Ruler />
					<div className="relative flex flex-1 flex-col gap-0.5 overflow-hidden bg-[#8c8c8c]">
						<Lane top><SamplesLane /></Lane>
						{samples.map((t, i) => <Lane key={i} track={t} />)}
						<Lane top><DrumsLane /></Lane>
						{drums.map((t, i) => <Lane key={i} track={t} />)}
						<Lane track={repro} top />
						<Lane track={diva} top />
						<div>
							<Lane track={poly} top />
							<AutomationLane />
						</div>
						<Grid />
					</div>
				</div>
			</div>
			<div className="flex w-[22px] flex-col items-center border-l-2 border-[#0a0a0a] pb-1 pt-2">
				<svg width="9" height="7" viewBox="0 0 9 7" fill="#8c8c8c" aria-hidden="true"><path d="M4.5,0 L9,7 H0 Z" /></svg>
				<div className="mt-[7px] h-[366px] w-[9px] rounded-[2px] bg-[#7b7b7b]" />
				<svg width="9" height="7" viewBox="0 0 9 7" fill="#b0b0b0" className="mt-auto" aria-hidden="true"><path d="M4.5,7 L9,0 H0 Z" /></svg>
			</div>
		</div>
		<div className="flex h-[23px] items-center">
			<div className="flex w-[262px] items-center gap-[7px] pl-[5px]">
				<button type="button" aria-label="Track I/O"><Arrows color="#d8d8d8" /></button>
				<button type="button" aria-label="Track view" className="ml-0.5">
					<svg width="12" height="9" viewBox="0 0 12 9" fill="#d8d8d8" shapeRendering="crispEdges"><path d="M0,0 H6 V1 H0 Z M0,2 H6 V3 H0 Z M0,4 H6 V5 H0 Z M0,6 H6 V7 H0 Z M7,0 H12 V3 H7 Z M7,4 H12 V7 H7 Z" /></svg>
				</button>
				<button type="button" aria-label="Follow playback" className="flex h-4 w-4 items-center justify-center rounded-[3px] bg-[#353535]">
					<svg width="10" height="10" viewBox="0 0 10 10" fill="none" stroke="#f5841a" strokeWidth="1.7"><path d="M0,1 H6.5 V8 M3.5,5.5 L6.5,8.5 L9.5,5.5" /></svg>
				</button>
				<button type="button" aria-label="Crossfade"><Cross size={8} color="#d8d8d8" /></button>
			</div>
			<svg width="7" height="9" viewBox="0 0 7 9" fill="#a5a5a5" className="ml-1" aria-hidden="true"><path d="M7,0 V9 L0,4.5 Z" /></svg>
			<div className="ml-2 flex-1">
				<div className="h-[9px] w-[58%] rounded-[2px] bg-[#7b7b7b]" />
			</div>
			<svg width="7" height="9" viewBox="0 0 7 9" fill="#a5a5a5" aria-hidden="true"><path d="M0,0 V9 L7,4.5 Z" /></svg>
			<button type="button" aria-label="Link automation" className="ml-[7px] flex h-4 w-[21px] items-center justify-center rounded-[3px] bg-[#353535]">
				<svg width="13" height="13" viewBox="0 0 13 13" fill="none" stroke="#f5841a" strokeWidth="1.3"><circle cx="2.5" cy="5" r="1.6" /><circle cx="10" cy="2.5" r="1.8" /><path d="M4,4.5 H7 L8.2,3.3" /><rect x="1" y="8.5" width="5" height="4" rx="1" /><rect x="7" y="8.5" width="5" height="4" rx="1" /><path d="M4,10.5 H9" /></svg>
			</button>
			<button type="button" aria-label="Grid" className="ml-[58px] flex items-center gap-1.5 text-[12px] text-[#d8d8d8]">
				4/1
				<svg width="5" height="3" viewBox="0 0 5 3" fill="#d8d8d8"><path d="M2.5,0 L5,3 H0 Z" /></svg>
			</button>
			<button type="button" aria-label="Snap" className="ml-3 mr-[26px]">
				<svg width="9" height="12" viewBox="0 0 9 12" fill="#d8d8d8"><path d="M0,2 H5 V0 L9,3 L5,6 V4 H0 Z M0,6 H1 V12 H0 Z M3,6 H4 V12 H3 Z M6,7 H7 V12 H6 Z" /></svg>
			</button>
		</div>
	</section>
);

/* ---------- devices ---------- */

const polar = (c, r, deg) => {
	const a = ((deg - 90) * Math.PI) / 180;
	return `${(c + r * Math.cos(a)).toFixed(2)},${(c + r * Math.sin(a)).toFixed(2)}`;
};

const Knob = ({ value, size = 29, bipolar }) => {
	const c = size / 2;
	const r = c - 1.2;
	const body = c * 0.68;
	const end = -140 + value * 280;
	return (
		<svg width={size} height={size} className="shrink-0" aria-hidden="true">
			<path d={`M${polar(c, r, -140)} A${r},${r} 0 1 1 ${polar(c, r, 140)}`} fill="none" stroke="#5c5c5c" strokeWidth="2" />
			{!bipolar && value > 0 && (
				<path d={`M${polar(c, r, -140)} A${r},${r} 0 ${value > 0.64 ? 1 : 0} 1 ${polar(c, r, end)}`} fill="none" stroke="#f5841a" strokeWidth="2" />
			)}
			{bipolar && <circle cx={c} cy={1.7} r="1.3" fill="#f5841a" />}
			<circle cx={c} cy={c} r={body} fill="#767676" stroke="#1e1e1e" />
			<path d={`M${polar(c, body * 0.35, end)} L${polar(c, body * 0.85, end)}`} stroke="#fff" strokeWidth={size > 30 ? 3 : 2.5} />
		</svg>
	);
};

const Device = ({ title, window: hasWindow = true, className, children }) => (
	<article className={clsx("flex h-[219px] shrink-0 rounded-[6px] bg-[#525252] p-[3px] pl-0", className)}>
		<div className="-my-[3px] mr-[3px] grid w-[27px] shrink-0 grid-rows-[1fr_auto_1fr] justify-items-center rounded-l-[6px] bg-[#404040]">
			<div className="flex flex-col items-center gap-[11px] pt-[7px]">
				<button type="button" aria-label={`${title} on/off`}><Power /></button>
				<SmallFolder />
			</div>
			<h3 className="rotate-180 whitespace-nowrap text-[10px] leading-[14px] text-[#f4f4f4] [writing-mode:vertical-rl]">{title}</h3>
			<div className="flex flex-col items-center gap-2.5 self-end pb-[9px]">
				{hasWindow && <WindowIcon />}
				<Dots />
				<Patch />
			</div>
		</div>
		{children}
	</article>
);

const Plus = ({ meter }) => (
	<div className="relative flex w-[21px] shrink-0 items-center justify-center">
		<button type="button" aria-label="Add device">
			<svg width="9" height="9" viewBox="0 0 9 9" fill="#b5b5b5"><path d="M3.7,0 H5.3 V3.7 H9 V5.3 H5.3 V9 H3.7 V5.3 H0 V3.7 H3.7 Z" /></svg>
		</button>
		{meter && <span className="absolute bottom-0 h-px w-[9px] bg-[#2f7a2f]" />}
	</div>
);

const Corner = ({ className }) => (
	<svg width="5" height="5" viewBox="0 0 5 5" className={clsx("absolute left-px top-px", className)} aria-hidden="true">
		<path d="M0,0 H5 L0,5 Z" fill="currentColor" />
	</svg>
);

const Transposer = () => {
	const [key, setKey] = useState("C");
	const [scale, setScale] = useState("Phrygian");
	return (
		<Device title="DIATONIC TRANSPOSER" window={false} className="w-[238px]">
			<div className="flex flex-1 flex-col rounded-[3px] bg-[#2e2e2e] p-1">
				<div className="relative grid grid-cols-6 text-[11px]">
					<Corner className="text-[#f5841a]" />
					{["C", "D", "E", "F♯", "G♯", "A♯", "C♯", "D♯", "F", "G", "A", "B"].map((k, i) => (
						<button
							key={k}
							type="button"
							onClick={() => setKey(k)}
							className={clsx("border-b-[3px]", i < 6 ? "h-[25px] pt-1 leading-[18px]" : "h-[27px] leading-6", k === key ? "border-[#f5841a] text-[#f5841a]" : "border-transparent text-[#d2d2d2]")}
						>
							{k}
						</button>
					))}
				</div>
				<div className="relative grid h-[73px] grid-cols-3 rounded-[3px] bg-[#1c1c1c] pt-px text-[11px]">
					<Corner className="text-[#ee2850]" />
					{["Major", "Minor", "Dorian", "Phrygian", "Lydian", "Mixolydian", "Locrian", "Harm. Minor", "Mel. Minor"].map((s) => (
						<button key={s} type="button" onClick={() => setScale(s)} className={clsx("whitespace-nowrap", s === scale ? "text-[#f5841a]" : "text-[#8a8a8a]")}>
							{s}
						</button>
					))}
				</div>
				<div className="mt-[7px] flex items-end justify-between">
					<span className="text-[10px] font-bold leading-2 text-white">Foreign Notes</span>
					<label className="flex w-[65px] flex-col gap-[3px] text-[10px] font-bold leading-[13px] text-white">
						Mode Shift
						<span className="relative block h-[25px] rounded-[3px] bg-[#1c1c1c]">
							<Corner className="text-[#f2e21c]" />
							<input className="h-full w-full bg-transparent pr-[5px] pt-0.5 text-right text-[11px] font-normal text-[#f5841a] outline-none" defaultValue="0 Steps" />
						</span>
					</label>
				</div>
				<div className="relative mt-auto grid grid-cols-2 text-[11px]">
					<Corner className="text-[#5cc81e]" />
					<button type="button" className="h-[25px] border-b-[3px] border-transparent pt-[3px] text-[#d2d2d2]">Filter</button>
					<button type="button" className="h-[25px] border-b-[3px] border-[#f5841a] pt-[3px] text-[#f5841a]">Constrain</button>
				</div>
			</div>
		</Device>
	);
};

const Param = ({ name, value, text }) => (
	<>
		<Knob value={value} />
		<span className="whitespace-nowrap text-[11px] leading-[13px] text-[#f2f2f2]">{name}<br />{text}</span>
	</>
);

const SearchBox = ({ label, disabled }) => (
	<label className={clsx("flex h-[21px] min-w-0 flex-1 items-center rounded-[3px] px-1", disabled ? "bg-[#444]" : "bg-[#1c1c1c]")}>
		<Search color={disabled ? "#9a9a9a" : "#f0f0f0"} />
		<input aria-label={label} disabled={disabled} className="min-w-0 flex-1 bg-transparent text-[11px] text-white outline-none" />
		<Cross color={disabled ? "#a5a5a5" : "#f0f0f0"} />
		<span className="w-0.5" />
	</label>
);

const DialIcon = ({ color, fill = "none" }) => (
	<svg width="12" height="12" viewBox="0 0 12 12" fill={fill} stroke={color} aria-hidden="true">
		<circle cx="6" cy="6" r="4.8" strokeWidth="1.5" />
		<circle cx="6" cy="6" r="1" fill={color} stroke="none" />
		<path d="M5.6,6.4 L3.2,8.2" strokeWidth="1.8" />
	</svg>
);

const RemoteDevice = ({ title, list, params }) => (
	<Device title={title} className="w-[203px]">
		<div className="flex min-w-0 flex-1 flex-col">
			<div className="flex items-center gap-[3px]">
				<button type="button" aria-label="Parameters" className="flex h-[21px] w-[21px] items-center justify-center rounded-[3px] bg-[#484848]"><DialIcon color="#f5841a" fill="#7a4a1c" /></button>
				{list && (
					<button type="button" aria-label="List" className="flex h-[21px] w-[21px] items-center justify-center">
						<svg width="9" height="9" viewBox="0 0 9 9" fill="#f0f0f0" shapeRendering="crispEdges"><path d="M0,0 H9 V1 H0 Z M0,2 H9 V3 H0 Z M0,4 H9 V5 H0 Z M0,6 H9 V7 H0 Z M0,8 H9 V9 H0 Z" /></svg>
					</button>
				)}
				<SearchBox label={`Search ${title}`} />
				<button type="button" aria-label="Next page" className="flex w-[21px] justify-center"><ArrowRight /></button>
			</div>
			<div className="mt-[3px] flex h-[34px] items-center gap-[5px] rounded-[3px] bg-[#404040] pl-[5px]">
				<Param {...params[0]} />
			</div>
			<ul className="relative mt-[3px] flex-1 overflow-hidden bg-[#2e2e2e]">
				{params.map((p, i) => (
					<li key={i} className="flex h-[30px] items-center gap-[5px] border-b border-[#585858] pl-[5px]">
						<Param {...p} />
					</li>
				))}
				<li aria-hidden="true" className="absolute right-0 top-0 h-[17px] w-1 bg-[#6a6a6a]" />
			</ul>
		</div>
	</Device>
);

const Presswerk = () => (
	<Device title="PRESSWERK" className="w-[203px]">
		<div className="flex min-w-0 flex-1 flex-col">
			<div className="flex items-center gap-[3px]">
				<button type="button" aria-label="Parameters" className="flex h-[21px] w-[21px] items-center justify-center"><DialIcon color="#ececec" /></button>
				<button type="button" aria-label="Sidechain" className="flex h-[21px] w-[21px] items-center justify-center rounded-[3px] bg-[#484848]">
					<svg width="13" height="12" viewBox="0 0 13 12" fill="none" stroke="#f5841a" strokeWidth="1.2"><path d="M5.5,0 V5 M3.5,3 L5.5,5 L7.5,3 M0,10 H3 M8,10 H12.5 M10.5,8 L12.5,10 L10.5,12" /><rect x="3" y="6.5" width="5" height="4.5" /></svg>
				</button>
				<SearchBox label="Search PRESSWERK" disabled />
				<button type="button" aria-label="Next page" className="flex w-[21px] justify-center"><ArrowRight /></button>
			</div>
			<div className="mt-[3px] flex-1 rounded-[3px] bg-[#424242] px-1 pt-px text-[11px] leading-[13px] text-[#f2f2f2]">
				<label htmlFor="sidechain" className="block pl-[3px] leading-[14px]">Select sidechain input:</label>
				<div className="relative mt-[3px] flex h-[19px] items-center rounded-[3px] border border-[#303030] bg-linear-to-b from-[#646464] to-[#7c7c7c]">
					<span className="absolute left-[3px]"><KindIcon kind="audio" /></span>
					<select id="sidechain" className="h-full w-full appearance-none bg-transparent pl-[17px] text-white outline-none">
						<option>E-Kick (POST)</option>
					</select>
					<span className="pointer-events-none absolute right-[3px]"><Caret /></span>
				</div>
				<p className="mt-[5px] pl-[3px]">Signal will be sent to the second stereo pair of the plug-in. (channel 3/4)</p>
			</div>
		</div>
	</Device>
);

const bands = [
	{ n: 1, color: "text-[#ef2b2b]", bar: "#ef2b2b", gain: "0.0 dB", freq: "23.3 Hz", q: "0.90", off: true, g: -1, f: 0, r: 4 },
	{ n: 2, color: "text-[#ef2b2b]", bar: "#ef2b2b", gain: "−5.8 dB", freq: "63.8 Hz", q: "2.24", g: 6, f: 2, r: 5 },
	{ n: 3, color: "text-[#ef2b2b]", bar: "#ef2b2b", gain: "+4.9 dB", freq: "107 Hz", q: "1.41", g: 5, f: 3, r: 4 },
	{ n: 4, color: "text-[#f5a92b]", bar: "#f5a92b", gain: "−9.5 dB", freq: "200 Hz", q: "0.79", g: 7, f: 4, r: 4 },
	{ n: 5, color: "text-[#2fe8dc]", bar: "#2fe8dc", gain: "0.0 dB", freq: "2.45 kHz", q: "0.59", off: true, g: -1, f: 8, r: 3 },
];

const freqs = [20, 30, 40, 50, 60, 70, 80, 90, 100, 200, 300, 400, 500, 600, 700, 800, 900, 1000, 2000, 3000, 4000, 5000, 6000, 7000, 8000, 9000, 10000];
const nodes = [[1, 14, 67], [2, 62, 82], [3, 86, 55], [4, 116, 91], [5, 235, 67]];

const BandShape = ({ n }) => (
	<svg width="13" height="9" viewBox="0 0 13 9" fill="none" stroke="currentColor" strokeWidth="1.2" aria-hidden="true">
		{n === 1 && <path d="M1,0 V3 H4 M4,0 V5 M6,8 V5 Q6,3 8,3 H13" />}
		{n === 5 && <path d="M0,3 H4 Q6,3 6,5 V9 M8,0 V3 H11 M11,0 V6" />}
		{n > 1 && n < 5 && <path d="M0,4.5 H3 L6.5,1 L10,4.5 L6.5,8 L3,4.5 M10,4.5 H13" />}
	</svg>
);

const Meter = ({ fill, top, height, dim }) => (
	<svg width="3" height="11" shapeRendering="crispEdges" className="shrink-0" aria-hidden="true">
		<rect width="3" height="11" fill={dim ? "#2f2f2f" : "#484848"} />
		<rect y={top} width="3" height={height} fill={fill} />
	</svg>
);

const Eq = () => {
	const fx = (f) => Math.round(83 + 110 * Math.log10(f / 100)) + 0.5;
	return (
		<Device title="EQ-5" className="w-[430px]">
			<div className="w-[341px] shrink-0 overflow-hidden rounded-[3px] bg-[#1c1c1c]">
				<div className="relative h-[133px] text-[9px] leading-3 text-[#8a8a8a]">
					<svg width="341" height="133" aria-hidden="true">
						<defs>
							<linearGradient id="eqLine" gradientUnits="userSpaceOnUse" x1="0" x2="269" y1="0" y2="0">
								<stop offset="0" stopColor="#5c1010" />
								<stop offset=".2" stopColor="#a31717" />
								<stop offset=".32" stopColor="#ee3024" />
								<stop offset=".4" stopColor="#f0752a" />
								<stop offset=".48" stopColor="#f3dc2a" />
								<stop offset=".58" stopColor="#b4f03c" />
								<stop offset=".7" stopColor="#3ee04a" />
								<stop offset=".86" stopColor="#2cf0c8" />
								<stop offset="1" stopColor="#6cc0ff" />
							</linearGradient>
						</defs>
						{freqs.map((f) => (
							<path key={f} d={`M${fx(f)},0 V133`} stroke={[100, 1000, 10000].includes(f) ? "#565656" : "#2f2f2f"} />
						))}
						{[16, 41, 66, 91, 116].map((y) => (
							<path key={y} d={`M0,${y}.5 H341`} stroke={y === 66 ? "#565656" : "#2f2f2f"} />
						))}
						<path d="M272,132 L276,130 L280,132 L285,130 L290,132 L296,129 L302,131 L309,129 L316,131 L322,130 L328,132" fill="none" stroke="#333" />
						<path
							d="M0,90 C5,80 12,66 26,65.5 S44,65 50,71 S58,80 62,80 S76,67 83.5,66.5 S96,72 102,79 S112,88 117,88.5 S134,83 149,77 S170,71 184,71 S210,72 226,83 S250,105 269,133"
							fill="none"
							stroke="url(#eqLine)"
							strokeWidth="1.8"
						/>
						{nodes.map(([n, x, y]) => <circle key={n} cx={x} cy={y} r="6" fill="#fff" />)}
					</svg>
					{nodes.map(([n, x, y]) => (
						<span key={n} className="absolute w-3 text-center text-[9px] font-bold text-black" style={{ left: x - 6, top: y - 6 }}>{n}</span>
					))}
					{[[20, "20"], [100, "100"], [1000, "1k"], [10000, "10k"]].map(([f, t]) => (
						<span key={f} className="absolute top-[5px]" style={{ left: Math.round(fx(f)) + 2 }}>{t}</span>
					))}
					{[[11, "+20"], [36, "+10"], [87, "-10"], [112, "-20"]].map(([y, t]) => (
						<span key={t} className="absolute right-1.5" style={{ top: y }}>{t}</span>
					))}
				</div>
				<div className="ml-[11px] flex gap-[19px] text-[11px]">
					{bands.map((b) => (
						<div key={b.n} className={clsx("flex w-[49px] flex-col", b.color)}>
							<div className="-mr-1 flex h-[15px] items-center pl-[5px]">
								<b className="w-4">{b.n}</b>
								<BandShape n={b.n} />
								<span className="ml-auto"><Caret color="currentColor" /></span>
							</div>
							<div className="mt-1 flex h-5 items-center justify-between whitespace-nowrap">
								<Meter fill={b.bar} top={b.g} height={b.g < 0 ? 0 : 1} dim={b.off} />
								<span className={b.off ? "text-[#5d5d80]" : ""}>{b.gain}</span>
							</div>
							<div className="flex h-5 items-center justify-between whitespace-nowrap">
								<Meter fill={b.bar} top={11 - b.f} height={b.f} />
								<span>{b.freq}</span>
							</div>
							<div className="flex h-5 items-center justify-between whitespace-nowrap">
								<Meter fill={b.bar} top={11 - b.r} height={b.r} />
								<span>{b.q}</span>
							</div>
						</div>
					))}
				</div>
			</div>
			<div className="ml-[3px] flex flex-1 flex-col items-center rounded-[3px] bg-[#424242] pt-1 text-[11px] leading-3 text-[#c4c4c4]">
				<span className="text-white">GLOBAL</span>
				<div className="mt-1"><Knob value={1} size={36} /></div>
				<span>Amount</span>
				<div className="mt-2"><Knob value={0.5} size={36} bipolar /></div>
				<span>Shift</span>
				<div className="relative mt-[9px] flex h-4 w-11 items-center rounded-[3px] border border-[#303030] bg-[#6e6e6e]">
					<select aria-label="Channels" className="h-full w-full appearance-none bg-transparent pl-1 leading-3 text-white outline-none">
						<option>Both</option>
					</select>
					<span className="pointer-events-none absolute right-[3px]"><Caret /></span>
				</div>
				<div className="mt-3"><Knob value={0.5} size={36} bipolar /></div>
				<span>Output</span>
			</div>
		</Device>
	);
};

const ChannelRow = ({ name, active, accent, underline, dim }) => (
	<div className={clsx("flex items-center text-[11px]", dim ? "text-[#7a7a7a]" : "text-[#d2d2d2]")}>
		<b className={clsx("w-[18px] text-[12px]", !dim && "text-[#4f9fe6]")}>{name}</b>
		{["L", "R", "M", "S"].map((c) => (
			<button key={c} type="button" className={clsx("h-[21px] w-5 border-b-[3px] pt-px", c === active ? clsx(accent, underline) : "border-transparent")}>{c}</button>
		))}
	</div>
);

const Spectrum = () => {
	const fx = (f) => Math.round(123 + 165 * Math.log10(f / 100)) + 0.5;
	return (
		<Device title="SPECTRUM" className="w-[560px]">
			<div className="relative flex-1 overflow-hidden rounded-[3px] bg-[#1c1c1c] text-[9px] leading-3 text-[#8a8a8a]">
				<svg width="527" height="187" className="block" aria-hidden="true">
					{freqs.map((f) => (
						<path key={f} d={`M${fx(f)},6 V179`} stroke={[100, 1000].includes(f) ? "#565656" : "#2f2f2f"} />
					))}
					{[6, 40, 75, 109, 144, 179].map((y) => (
						<path key={y} d={`M0,${y}.5 H527`} stroke={y === 6 ? "#4a4a4a" : "#2f2f2f"} />
					))}
					<path d="M21,185 Q36,169 48,169.3 T79,185 M130,185 L134,178 H135 L140,185" fill="none" stroke="#4a8fd0" strokeWidth="1.2" />
					<path d="M308,185 H311 M313,185 H315 M317,184 H319 L321,181 L322,185 M331,185 H332 L334,183 L336,185 L338,182 L340,180 L342,185 M345,184 H347 M350,183 L351,185 M354,185 H355 L356,180 L358,180 V185 M290,184 H292 M275,185 H278" fill="none" stroke="#4a8fd0" strokeWidth="1.5" />
				</svg>
				{[[20, "20"], [100, "100"], [1000, "1k"]].map(([f, t]) => (
					<span key={f} className="absolute top-[5px]" style={{ left: Math.round(fx(f)) + 2 }}>{t}</span>
				))}
				<div className="flex items-center pl-1.5">
					<ChannelRow name="A" active="L" accent="text-[#5aaaf0]" underline="border-[#5aaaf0]" />
					<div className="ml-[182px]"><ChannelRow name="B" active="R" accent="text-[#8a5a2a]" underline="border-[#8a5a2a]" dim /></div>
					<button type="button" className="ml-1 flex h-5 w-[90px] shrink-0 items-center gap-[5px] rounded-[3px] bg-[#333] pl-[7px] text-[11px]">
						<Cross color="#9a9a9a" />
						Device
					</button>
				</div>
			</div>
		</Device>
	);
};

const reproParams = [
	{ name: "Output", text: "78.00", value: 0.4 },
	{ name: "Source", text: "Velocity", value: 0.73 },
	{ name: "Depth #1", text: "34.00", value: 0.66 },
	{ name: "Source", text: "none", value: 0 },
	{ name: "Depth #1", text: "0.00", value: 0.5 },
];
const satinParams = [
	{ name: "main: Active #Satin", text: "On", value: 1 },
	{ name: "Midi: InternalNote", text: "0.00", value: 0 },
	{ name: "Midi: InternalVel", text: "0.00", value: 0 },
	{ name: "Satin: Input Gain", text: "8.80", value: 0.73 },
	{ name: "Satin: Output Gain", text: "-3.60", value: 0.37 },
];

const DevicePanel = () => (
	<section className="relative mx-1 mt-[3px] overflow-hidden rounded-[6px] border-[3px] border-[#525252] bg-[#0d0d0d]">
		<div className="flex">
			<div className="w-[5px] shrink-0 bg-[#9449cf]" />
			<div className="min-w-0 flex-1">
				<div className="flex pt-[11px]">
					<div className="flex w-[27px] shrink-0 items-center justify-center">
						<h2 className="rotate-180 whitespace-nowrap text-[11px] leading-[14px] text-white [writing-mode:vertical-rl]">REPRO-1 BASS</h2>
					</div>
					<Plus />
					<Transposer />
					<Plus />
					<RemoteDevice title="REPRO-1" list params={reproParams} />
					<Plus />
					<RemoteDevice title="SATIN" params={satinParams} />
					<Plus meter />
					<Presswerk />
					<Plus meter />
					<Eq />
					<Plus meter />
					<Spectrum />
				</div>
				<div className="ml-[27px] mt-[7px] h-1 w-[92%] bg-[#626262]" />
			</div>
		</div>
		<div className="absolute inset-y-0 right-0 w-1.5 bg-linear-to-r from-transparent to-[#0d0d0d]" />
	</section>
);

/* ---------- status bar ---------- */

const StatusBar = () => (
	<footer className="flex h-9 items-center border-b border-[#7d7d7d] pl-[17px] pr-3.5 text-[11px] text-[#ddd]">
		<button type="button" aria-label="Info">
			<svg width="6" height="10" viewBox="0 0 6 10" fill="#ccc"><path d="M2,0 H4.5 V2 H2 Z M0,3.5 H4.5 V8.5 H6 V10 H0 V8.5 H1.5 V5 H0 Z" /></svg>
		</button>
		<span className="ml-[15px] h-5 w-0.5 bg-[#777]" />
		<nav className="ml-[15px] flex gap-4">
			<a href="#arrange" className="text-[#f5841a]">ARRANGE</a>
			<a href="#mix">MIX</a>
			<a href="#edit">EDIT</a>
		</nav>
		<span className="ml-4 h-5 w-0.5 bg-[#777]" />
		<div className="ml-3.5 flex items-center gap-[18px]">
			<button type="button" aria-label="Detail editor">
				<svg width="12" height="11" viewBox="0 0 12 11" fill="#ccc"><path d="M0,0 H4 V2 H0 Z M5,3 H7 V5 H5 Z M8,4 H12 V6 H8 Z M0,6 H3 V8 H0 Z M4,4 H6 V6 H4 Z M2,9 H4 V11 H0 V9 Z M8,8 H11 V10 H8 Z" /></svg>
			</button>
			<button type="button" aria-label="Automation editor">
				<svg width="11" height="11" viewBox="0 0 11 11" fill="none" stroke="#ccc" strokeWidth="1.4"><circle cx="2.5" cy="8.5" r="1.6" /><circle cx="8.3" cy="2.5" r="1.6" /><path d="M3,7 L5,5 M5,7 L8,5" strokeWidth="2" /></svg>
			</button>
			<button type="button" aria-label="Device panel">
				<svg width="15" height="13" viewBox="0 0 15 13" fill="none" stroke="#f5841a" strokeWidth="1.6"><rect x="1" y="1" width="13" height="11" rx="1.5" /><path d="M3,1 V12" strokeWidth="2" /></svg>
			</button>
			<button type="button" aria-label="Mixer panel">
				<svg width="11" height="11" viewBox="0 0 11 11" fill="#ccc"><path d="M0,0 H3 V11 H0 Z M4,0 H7 V11 H4 Z M8,0 H11 V11 H8 Z" /></svg>
			</button>
		</div>
		<p className="ml-[29px]">DOUBLE-CLICK <span className="ml-0.5 text-[#8f8f8f]">Maximize window</span></p>
		<div className="ml-auto flex items-center gap-5">
			<button type="button" aria-label="Browser"><SmallFolder fill="#ccc" /></button>
			<button type="button" aria-label="Project">
				<svg width="9" height="11" viewBox="0 0 9 11" fill="#ccc"><path d="M0,0 H6 L9,4 V11 H0 Z" /></svg>
			</button>
			<button type="button" aria-label="Mappings"><Arrows color="#ccc" /></button>
			<button type="button" aria-label="Touch">
				<svg width="12" height="12" viewBox="0 0 12 12" fill="#ccc"><path d="M3,1 Q4,0 5,1 V5 L10.5,6.5 V10 Q10,12 8,12 H4.5 L0,8 L1,7 L3,8 Z" /></svg>
			</button>
		</div>
		<span className="ml-4 h-5 w-0.5 bg-[#777]" />
		<button type="button" aria-label="Keyboard" className="ml-3">
			<svg width="12" height="11" viewBox="0 0 12 11" fill="#ccc"><path d="M0,0 H2 V7 H3.5 V11 H0 Z M5,0 H7 V11 H4.3 V7 H5 Z M10,0 H12 V11 H8.2 V7 H10 Z" /></svg>
		</button>
	</footer>
);

export default function App() {
	return (
		<main className="flex min-h-screen flex-col overflow-hidden bg-[#2e2e2e] font-['Lato',sans-serif] text-[11px] select-none">
			<TitleBar />
			<Transport />
			<Arranger />
			<DevicePanel />
			<StatusBar />
		</main>
	);
}
